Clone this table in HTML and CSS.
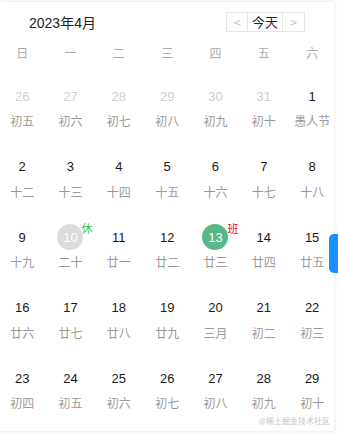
FILE: index.html
```html
<!DOCTYPE html>
<html lang="zh">
<head>
<meta charset="utf-8">
<link rel="stylesheet" href="styles.css">
</head>
<body>
<div class="card">
  <div class="header">
    <div class="title">2023年4月</div>
    <div class="btns">
      <span class="btn arrow">&lt;</span>
      <span class="btn today">今天</span>
      <span class="btn arrow arrow-next">&gt;</span>
    </div>
  </div>
  <div class="weekdays">
    <span>日</span><span>一</span><span>二</span><span>三</span><span>四</span><span>五</span><span>六</span>
  </div>
  <div class="grid">
    <div class="cell other"><span class="num">26</span><span class="lunar">初五</span></div>
    <div class="cell other"><span class="num">27</span><span class="lunar">初六</span></div>
    <div class="cell other"><span class="num">28</span><span class="lunar">初七</span></div>
    <div class="cell other"><span class="num">29</span><span class="lunar">初八</span></div>
    <div class="cell other"><span class="num">30</span><span class="lunar">初九</span></div>
    <div class="cell other"><span class="num">31</span><span class="lunar">初十</span></div>
    <div class="cell"><span class="num">1</span><span class="lunar">愚人节</span></div>

    <div class="cell"><span class="num">2</span><span class="lunar">十二</span></div>
    <div class="cell"><span class="num">3</span><span class="lunar">十三</span></div>
    <div class="cell"><span class="num">4</span><span class="lunar">十四</span></div>
    <div class="cell"><span class="num">5</span><span class="lunar">十五</span></div>
    <div class="cell"><span class="num">6</span><span class="lunar">十六</span></div>
    <div class="cell"><span class="num">7</span><span class="lunar">十七</span></div>
    <div class="cell"><span class="num">8</span><span class="lunar">十八</span></div>

    <div class="cell"><span class="num">9</span><span class="lunar">十九</span></div>
    <div class="cell"><span class="num rest">10<i class="mark mark-rest">休</i></span><span class="lunar">二十</span></div>
    <div class="cell"><span class="num">11</span><span class="lunar">廿一</span></div>
    <div class="cell"><span class="num">12</span><span class="lunar">廿二</span></div>
    <div class="cell"><span class="num selected">13<i class="mark mark-work">班</i></span><span class="lunar">廿三</span></div>
    <div class="cell"><span class="num">14</span><span class="lunar">廿四</span></div>
    <div class="cell"><span class="num">15</span><span class="lunar">廿五</span></div>

    <div class="cell"><span class="num">16</span><span class="lunar">廿六</span></div>
    <div class="cell"><span class="num">17</span><span class="lunar">廿七</span></div>
    <div class="cell"><span class="num">18</span><span class="lunar">廿八</span></div>
    <div class="cell"><span class="num">19</span><span class="lunar">廿九</span></div>
    <div class="cell"><span class="num">20</span><span class="lunar">三月</span></div>
    <div class="cell"><span class="num">21</span><span class="lunar">初二</span></div>
    <div class="cell"><span class="num">22</span><span class="lunar">初三</span></div>

    <div class="cell"><span class="num">23</span><span class="lunar">初四</span></div>
    <div class="cell"><span class="num">24</span><span class="lunar">初五</span></div>
    <div class="cell"><span class="num">25</span><span class="lunar">初六</span></div>
    <div class="cell"><span class="num">26</span><span class="lunar">初七</span></div>
    <div class="cell"><span class="num">27</span><span class="lunar">初八</span></div>
    <div class="cell"><span class="num">28</span><span class="lunar">初九</span></div>
    <div class="cell"><span class="num">29</span><span class="lunar">初十</span></div>
  </div>
  <div class="watermark">@稀土掘金技术社区</div>
</div>
<div class="side-tab"></div>
</body>
</html>
```

FILE: styles.css
```css
html, body {
  margin: 0;
  padding: 0;
  background: #fff;
  overflow: hidden;
}
body {
  width: 338px;
  height: 436px;
  position: relative;
  font-family: "Liberation Sans", "Noto Sans CJK SC", sans-serif;
  color: #222;
}
.card {
  position: relative;
  margin: 2px 0 0 -2px;
  width: 336px;
  height: 429px;
  box-sizing: border-box;
  padding-top: 10px;
  background: #fff;
  box-shadow: 0 0 4px rgba(0, 0, 0, 0.13);
}
.header {
  display: flex;
  align-items: center;
  justify-content: space-between;
  height: 20px;
  padding: 0 29px 0 31px;
}
.title {
  font-size: 14px;
  color: #222;
}
.btns {
  display: flex;
  height: 20px;
  border: 1px solid #e6e6e6;
  box-sizing: border-box;
}
.btn {
  display: flex;
  align-items: center;
  justify-content: center;
  font-size: 13px;
  line-height: 18px;
}
.arrow {
  width: 20px;
  color: #c0c0c0;
  font-size: 12px;
  font-family: "Noto Sans CJK SC", sans-serif;
}
.arrow-next {
  width: 21px;
}
.today {
  width: 34px;
  color: #222;
  border-left: 1px solid #e6e6e6;
  border-right: 1px solid #e6e6e6;
  font-family: "Noto Sans CJK SC", sans-serif;
}
.weekdays {
  display: grid;
  grid-template-columns: repeat(7, 48.33px);
  margin-top: 11px;
  height: 20px;
  align-items: center;
  font-size: 12px;
  color: #ababab;
  font-family: "Noto Sans CJK SC", sans-serif;
}
.weekdays span {
  text-align: center;
  line-height: 20px;
}
.grid {
  display: grid;
  grid-template-columns: repeat(7, 48.33px);
  grid-auto-rows: 70.5px;
  margin-top: 7px;
}
.cell {
  display: flex;
  flex-direction: column;
  align-items: center;
  padding-top: 13px;
}
.num {
  position: relative;
  width: 26px;
  height: 26px;
  border-radius: 50%;
  display: flex;
  align-items: center;
  justify-content: center;
  font-size: 13px;
  color: #1a1a1a;
}
.other .num {
  color: #d0d0d0;
}
.num.rest {
  background: #dcdcdc;
  color: #fff;
}
.num.selected {
  background: #57b987;
  color: #fff;
}
.mark {
  position: absolute;
  top: -2px;
  left: 24px;
  font-style: normal;
  font-size: 11px;
  line-height: 12px;
  font-family: "Noto Sans CJK SC", sans-serif;
}
.mark-rest {
  color: #3cc23c;
}
.mark-work {
  color: #ee1111;
  left: 25px;
}
.lunar {
  margin-top: 4px;
  font-size: 12px;
  line-height: 16px;
  color: #9a9a9a;
  font-family: "Noto Sans CJK SC", sans-serif;
  white-space: nowrap;
}
.watermark {
  position: absolute;
  right: 4px;
  bottom: 5px;
  font-size: 8px;
  color: #c4c4c4;
  font-family: "Noto Sans CJK SC", sans-serif;
}
.side-tab {
  position: absolute;
  left: 329px;
  top: 234px;
  width: 12px;
  height: 39px;
  background: #1890ff;
  border-radius: 5px 0 0 5px;
}
```
